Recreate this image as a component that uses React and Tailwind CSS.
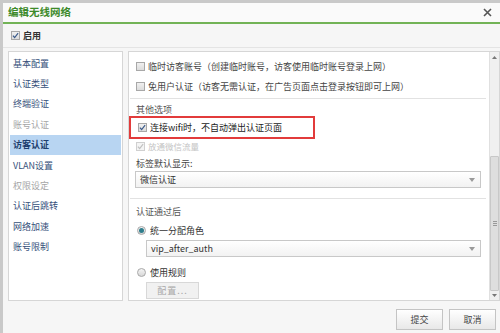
import React from "react";

const navItems = [
    {label: "基本配置"},
    {label: "认证类型"},
    {label: "终端验证"},
    {label: "账号认证", muted: true},
    {label: "访客认证", active: true},
    {label: "VLAN设置"},
    {label: "权限设定", muted: true},
    {label: "认证后跳转"},
    {label: "网络加速"},
    {label: "账号限制"},
];

const Check = ({checked, disabled}) => (
    <span
        className={`inline-flex items-center justify-center w-[9px] h-[9px] border shrink-0 ${
            disabled ? "border-[#d0d0d0] bg-[#f4f4f4]" : "border-[#a8a8a8] bg-gradient-to-b from-[#f0f0f0] to-[#dcdcdc]"
        }`}
    >
        {checked && (
            <svg width="7" height="7" viewBox="0 0 8 8">
                <path d="M1 4.2 L3 6.3 L7 1.2" fill="none" stroke={disabled ? "#c0c0c0" : "#3a5a8a"} strokeWidth="1.3" />
            </svg>
        )}
    </span>
);

const Radio = ({checked}) => (
    <span className="inline-flex items-center justify-center w-[9px] h-[9px] rounded-full border border-[#a8a8a8] bg-gradient-to-b from-[#f4f4f4] to-[#d8d8d8] shrink-0">
        {checked && <span className="w-[5px] h-[5px] rounded-full bg-[#2e7d8c]" />}
    </span>
);

const Select = ({value, className}) => (
    <div
        className={`flex items-center justify-between h-[17px] border border-[#c8c8c8] bg-gradient-to-b from-white to-[#f2f2f2] pl-[4px] pr-[5px] ${className}`}
    >
        <span className="text-[#333]">{value}</span>
        <svg width="6" height="4" viewBox="0 0 6 4">
            <path d="M0 0 L6 0 L3 4 Z" fill="#9a9a9a" />
        </svg>
    </div>
);

const App = () => {
    return (
        <div
            className="w-[500px] h-[333px] overflow-hidden bg-[#c9c9c9] pl-[3px] pt-[3px] text-[9px] leading-none"
            style={{fontFamily: '"Noto Sans CJK SC", "Noto Sans", sans-serif'}}
        >
            <div className="h-full bg-[#f6f6f6] flex flex-col">
                {/* title bar */}
                <div className="h-[21px] shrink-0 flex items-center justify-between pl-[5px] pr-[8px] bg-[#fafafa] border-b-2 border-[#72b356]">
                    <span className="text-[10.5px] font-bold text-[#3d8a2a]">编辑无线网络</span>
                    <svg width="9" height="9" viewBox="0 0 9 9">
                        <path d="M1 1 L8 8 M8 1 L1 8" stroke="#555" strokeWidth="1.6" />
                    </svg>
                </div>

                {/* enable */}
                <div className="h-[24px] shrink-0 flex items-center gap-[3px] pl-[8px] border-b border-[#e4e4e4]">
                    <Check checked />
                    <span className="text-[#333] font-bold">启用</span>
                </div>

                {/* body */}
                <div className="flex gap-[5px] pl-[5px] pt-[3px] h-[253px] shrink-0">
                    <div className="w-[115px] border border-[#d6d6d6] bg-white pt-[1px] pl-px pr-px">
                        {navItems.map((item) => (
                            <div
                                key={item.label}
                                className={`h-[20.4px] flex items-center pl-[3px] ${
                                    item.active ? "bg-[#b8d5f2] text-[#1f3f6e] font-bold" : item.muted ? "text-[#a5a5a5]" : "text-[#35507a]"
                                }`}
                            >
                                {item.label}
                            </div>
                        ))}
                    </div>

                    <div className="flex-1 flex border border-[#d6d6d6] bg-white">
                        <div className="flex-1 flex flex-col pt-[4px]">
                            <div className="h-[20px] flex items-center gap-[3px] pl-[7px] text-[#444]">
                                <Check />
                                <span>临时访客账号（创建临时账号，访客使用临时账号登录上网）</span>
                            </div>
                            <div className="h-[20px] flex items-center gap-[3px] pl-[7px] text-[#444]">
                                <Check />
                                <span>免用户认证（访客无需认证，在广告页面点击登录按钮即可上网）</span>
                            </div>
                            <div className="mt-[2px] ml-px mr-[3px] border-t border-[#e2e2e2]" />
                            <div className="pl-[7px] pt-[6px] text-[#555]">其他选项</div>
                            <div className="mt-[2px] w-[186px] h-[23px] flex items-center gap-[3px] pl-[7px] border-2 border-[#e23b3b] text-[#222]">
                                <Check checked />
                                <span>连接wifi时，不自动弹出认证页面</span>
                            </div>
                            <div className="h-[14px] flex items-center gap-[3px] pl-[7px] text-[#c4c4c4] text-[8.5px]">
                                <Check checked disabled />
                                <span>放通微信流量</span>
                            </div>
                            <div className="pl-[7px] pt-[6px] text-[#444]">标签默认显示:</div>
                            <Select value="微信认证" className="mt-[3px] ml-[6px] mr-[8px]" />
                            <div className="mt-[10px] ml-px mr-[3px] border-t border-[#e2e2e2]" />
                            <div className="pl-[7px] pt-[8px] text-[#555]">认证通过后</div>
                            <div className="h-[20px] mt-[4px] flex items-center gap-[4px] pl-[8px] text-[#333]">
                                <Radio checked />
                                <span>统一分配角色</span>
                            </div>
                            <Select value="vip_after_auth" className="ml-[17px] mr-[8px]" />
                            <div className="h-[20px] mt-[5px] flex items-center gap-[4px] pl-[8px] text-[#333]">
                                <Radio />
                                <span>使用规则</span>
                            </div>
                            <div className="ml-[17px] w-[53px] h-[17px] flex items-center justify-center border border-[#d8d8d8] bg-[#f1f1f1] text-[#a8a8a8] tracking-[1px]">
                                配置...
                            </div>
                        </div>

                        {/* scrollbar */}
                        <div className="w-[10px] flex flex-col bg-[#f0f0f0] border-l border-[#e0e0e0]">
                            <div className="h-[10px] flex items-center justify-center">
                                <svg width="5" height="3" viewBox="0 0 5 3">
                                    <path d="M0 3 L5 3 L2.5 0 Z" fill="#777" />
                                </svg>
                            </div>
                            <div className="h-[94px]" />
                            <div className="flex-1 flex items-center justify-center bg-[#dedede] border border-[#c8c8c8] rounded-[1px]">
                                <div className="flex flex-col gap-px">
                                    <span className="w-[4px] h-px bg-[#999]" />
                                    <span className="w-[4px] h-px bg-[#999]" />
                                    <span className="w-[4px] h-px bg-[#999]" />
                                </div>
                            </div>
                            <div className="h-[9px] flex items-center justify-center">
                                <svg width="5" height="3" viewBox="0 0 5 3">
                                    <path d="M0 0 L5 0 L2.5 3 Z" fill="#777" />
                                </svg>
                            </div>
                        </div>
                    </div>
                </div>

                {/* footer */}
                <div className="flex justify-end gap-[6px] pr-[4px] pt-[8px]">
                    <button className="w-[47px] h-[21px] border border-[#c4c4c4] bg-gradient-to-b from-white to-[#e8e8e8] text-[#444] text-[9px]">提交</button>
                    <button className="w-[47px] h-[21px] border border-[#c4c4c4] bg-gradient-to-b from-white to-[#e8e8e8] text-[#444] text-[9px]">取消</button>
                </div>
            </div>
        </div>
    );
};

export default App;
